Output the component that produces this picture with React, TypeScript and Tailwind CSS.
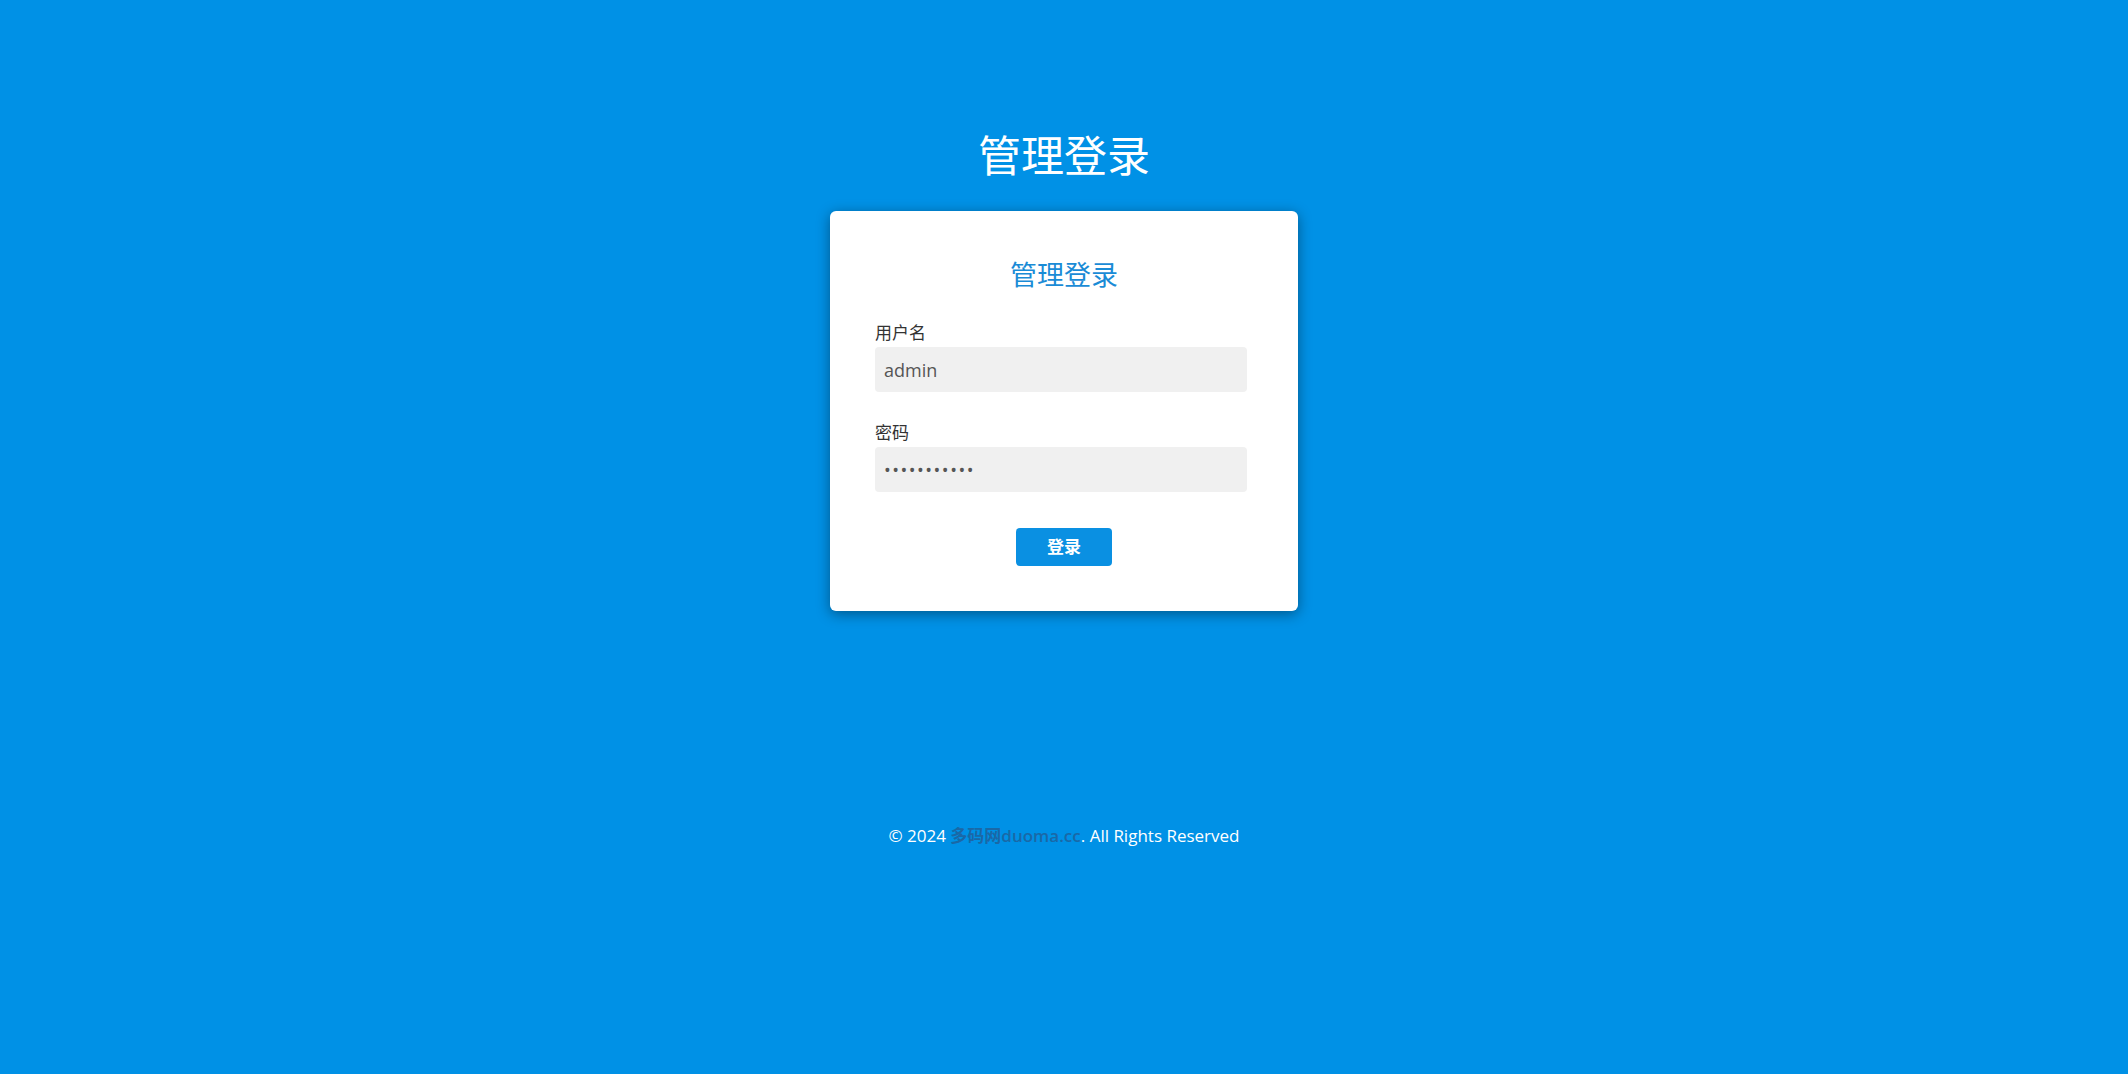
export default function App() {
  return (
    <main className="min-h-screen w-full bg-[#0091e6] flex flex-col items-center font-['Open_Sans','Noto_Sans_CJK_SC',sans-serif]">
      <h1 className="mt-[130px] text-[43px] leading-[52px] text-white">管理登录</h1>
      <div className="mt-[29px] w-[468px] h-[400px] bg-white rounded-md shadow-[0_3px_14px_rgba(0,0,0,0.4)] pl-[45px] pt-[46px]">
        <h2 className="w-[378px] text-center text-[27px] leading-[36px] text-[#1a8bd6]">管理登录</h2>
        <div className="mt-[28px] flex flex-col">
          <label className="text-[17px] leading-[24px] text-[#333]">用户名</label>
          <input
            type="text"
            defaultValue="admin"
            className="mt-[2px] w-[372px] h-[45px] rounded bg-[#f0f0f0] px-[9px] text-[18px] text-[#555] outline-none"
          />
        </div>
        <div className="mt-[29px] flex flex-col">
          <label className="text-[17px] leading-[24px] text-[#333]">密码</label>
          <input
            type="password"
            defaultValue="12345678901"
            className="mt-[2px] w-[372px] h-[45px] rounded bg-[#f0f0f0] px-[9px] text-[18px] tracking-[1.5px] text-[#555] outline-none"
          />
        </div>
        <div className="w-[378px] flex justify-center mt-[36px]">
          <button className="w-[96px] h-[38px] rounded bg-[#0a90e2] text-white text-[17px] font-bold">登录</button>
        </div>
      </div>
      <footer className="mt-[212px] text-[17px] leading-[26px] text-white">
        © 2024 <a className="font-semibold text-[#1a68a6]">多码网duoma.cc</a>. All Rights Reserved
      </footer>
    </main>
  )
}
